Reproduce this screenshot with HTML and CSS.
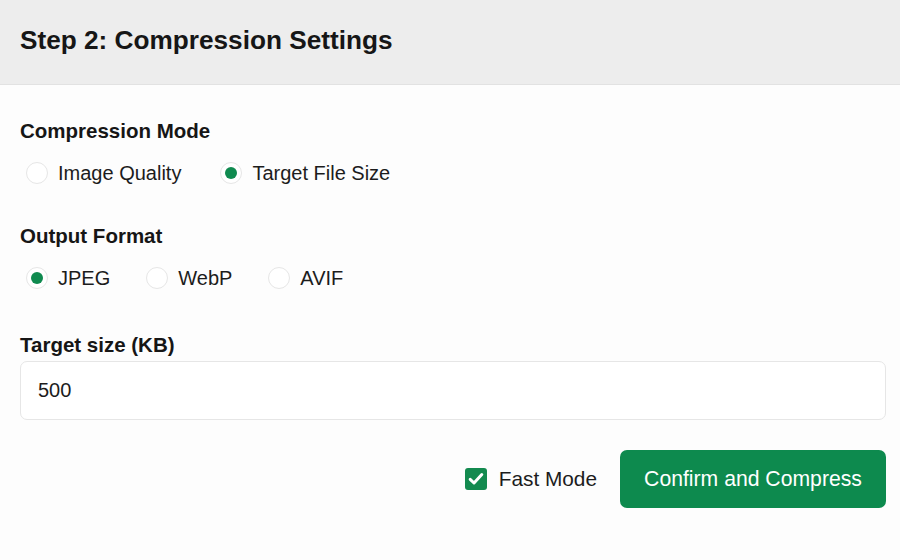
FILE: index.html
```html
<!DOCTYPE html>
<html lang="en">
<head>
<meta charset="utf-8">
<title>Compression Settings</title>
<link rel="stylesheet" href="styles.css">
</head>
<body>
<div class="panel">
  <header class="panel-header">
    <h2 class="panel-title">Step 2: Compression Settings</h2>
  </header>
  <div class="panel-body">
    <section class="field field-mode">
      <div class="field-label">Compression Mode</div>
      <div class="radio-row">
        <label class="radio"><span class="radio-dot"></span><span class="radio-text">Image Quality</span></label>
        <label class="radio checked"><span class="radio-dot"></span><span class="radio-text">Target File Size</span></label>
      </div>
    </section>
    <section class="field field-format">
      <div class="field-label">Output Format</div>
      <div class="radio-row">
        <label class="radio checked"><span class="radio-dot"></span><span class="radio-text">JPEG</span></label>
        <label class="radio"><span class="radio-dot"></span><span class="radio-text">WebP</span></label>
        <label class="radio"><span class="radio-dot"></span><span class="radio-text">AVIF</span></label>
      </div>
    </section>
    <section class="field field-size">
      <div class="field-label">Target size (KB)</div>
      <div class="text-input">500</div>
    </section>
    <div class="actions">
      <label class="checkbox">
        <span class="check-box">
          <svg width="16" height="14" viewBox="0 0 16 14"><path d="M2.2 7.4 L6 11 L13.8 2.6" fill="none" stroke="#fff" stroke-width="3" stroke-linecap="round" stroke-linejoin="round"/></svg>
        </span>
        <span class="check-text">Fast Mode</span>
      </label>
      <button class="btn-primary">Confirm and Compress</button>
    </div>
  </div>
</div>
</body>
</html>
```
FILE: styles.css
```css
* { box-sizing: border-box; }
html, body {
  margin: 0;
  padding: 0;
  background: #fdfdfd;
  font-family: "Liberation Sans", Arial, sans-serif;
  color: #1a1a1a;
}
.panel { width: 900px; height: 560px; }
.panel-header {
  height: 85px;
  background: #ededed;
  border-bottom: 1px solid #e2e2e2;
  display: flex;
  align-items: center;
  padding: 0 20px 3px;
}
.panel-title {
  margin: 0;
  font-size: 26.2px;
  font-weight: 700;
  color: #161616;
}
.panel-body {
  padding: 34px 14px 0 20px;
}
.field-label {
  font-size: 20.5px;
  font-weight: 700;
  line-height: 24px;
  color: #161616;
}
.radio-row {
  display: flex;
  align-items: center;
  margin-top: 18px;
  height: 24px;
}
.field-format { margin-top: 39px; }
.field-size { margin-top: 43px; }
.radio {
  display: flex;
  align-items: center;
  margin-right: 39px;
  margin-left: 6px;
}
.radio + .radio { margin-left: 0; }
.field-format .radio { margin-right: 36px; }
.radio-dot {
  width: 22px;
  height: 22px;
  border-radius: 50%;
  border: 1px solid #e6e6e6;
  background: #fff;
  display: flex;
  align-items: center;
  justify-content: center;
  margin-right: 10px;
}
.radio.checked .radio-dot::after {
  content: "";
  width: 12px;
  height: 12px;
  border-radius: 50%;
  background: #0f8a4f;
}
.radio-text {
  font-size: 20px;
  line-height: 24px;
  color: #1c1c1c;
}
.text-input {
  margin-top: 4px;
  height: 59px;
  border: 1px solid #e6e6e6;
  border-radius: 7px;
  background: #fff;
  padding: 0 17px;
  display: flex;
  align-items: center;
  font-size: 20px;
  color: #1c1c1c;
}
.actions {
  display: flex;
  justify-content: flex-end;
  align-items: center;
  margin-top: 30px;
}
.checkbox {
  display: flex;
  align-items: center;
  margin-right: 23px;
}
.check-box {
  width: 22px;
  height: 22px;
  border-radius: 3px;
  background: #138a4f;
  display: flex;
  align-items: center;
  justify-content: center;
  margin-right: 12px;
}
.check-text {
  font-size: 20.8px;
  color: #1c1c1c;
}
.btn-primary {
  height: 58px;
  width: 266px;
  border: none;
  border-radius: 7px;
  background: #0d8a4e;
  color: #fff;
  font-family: "Liberation Sans", Arial, sans-serif;
  font-size: 21.2px;
  padding: 0;
}
```
